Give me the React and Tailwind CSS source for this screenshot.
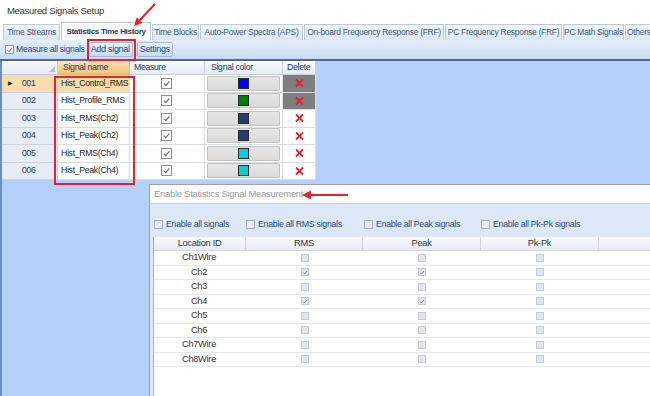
import React from "react";

const tabs = [
  { label: "Time Streams", w: "w-[57px]" },
  { label: "Statistics Time History", w: "w-[90px]", active: true },
  { label: "Time Blocks", w: "w-[47px]" },
  { label: "Auto-Power Spectra (APS)", w: "w-[103px]" },
  { label: "On-board Frequency Response (FRF)", w: "w-[140px]" },
  { label: "PC Frequency Response (FRF)", w: "w-[117px]" },
  { label: "PC Math Signals", w: "w-[61px]" },
  { label: "Others", w: "w-[40px]", left: true },
];

const signals = [
  { id: "001", name: "Hist_Control_RMS", color: "bg-[#0000ff]", dark: true, current: true },
  { id: "002", name: "Hist_Profile_RMS", color: "bg-[#008000]", dark: true },
  { id: "003", name: "Hist_RMS(Ch2)", color: "bg-[#1d3f73]" },
  { id: "004", name: "Hist_Peak(Ch2)", color: "bg-[#1d3f73]" },
  { id: "005", name: "Hist_RMS(Ch4)", color: "bg-[#12cccc]" },
  { id: "006", name: "Hist_Peak(Ch4)", color: "bg-[#12cccc]" },
];

const locations = [
  { id: "Ch1Wire" },
  { id: "Ch2", rms: true, peak: true },
  { id: "Ch3" },
  { id: "Ch4", rms: true, peak: true },
  { id: "Ch5" },
  { id: "Ch6" },
  { id: "Ch7Wire" },
  { id: "Ch8Wire" },
];

function CheckMark({ className }) {
  return (
    <svg viewBox="0 0 10 10" className={className}>
      <path d="M2 5.2 L4.2 7.4 L8.2 2.6" fill="none" stroke="currentColor" strokeWidth="1.3" />
    </svg>
  );
}

function GridCheck() {
  return (
    <div className="w-[11px] h-[11px] border border-[#8d9096] bg-white flex items-center justify-center">
      <CheckMark className="w-[9px] h-[9px] text-[#6b6e73]" />
    </div>
  );
}

function SmallCheck({ checked }) {
  return (
    <div className="w-[8px] h-[8px] border border-[#c4cbd6] bg-[#e1e6ee] flex items-center justify-center">
      {checked && <CheckMark className="w-[7px] h-[7px] text-[#4d6186]" />}
    </div>
  );
}

function RedX() {
  return (
    <svg viewBox="0 0 10 10" className="w-[11px] h-[10px]">
      <path d="M1.5 1.5 L8.5 8.5 M8.5 1.5 L1.5 8.5" stroke="#d9222a" strokeWidth="1.8" />
    </svg>
  );
}

function OptionBox({ label, w }) {
  return (
    <div className={`${w} flex items-center gap-[3px] shrink-0`}>
      <div className="w-[9px] h-[9px] border border-[#a7afbb] bg-[#e9edf3]" />
      <span className="text-[#2f4d78]">{label}</span>
    </div>
  );
}

export default function App() {
  return (
    <div className="relative w-[650px] h-[396px] overflow-hidden bg-white flex flex-col font-['Liberation_Sans',Arial,sans-serif] text-[9px] tracking-[-0.3px] leading-none">
      {/* title */}
      <div className="h-[22px] shrink-0 flex items-center pl-[7px] text-[9.5px] text-[#333]">Measured Signals Setup</div>

      {/* tabs */}
      <div className="h-[18px] shrink-0 flex items-end gap-[1px] pl-[3px] text-[8.5px]">
        {tabs.map((t) =>
          t.active ? (
            <div key={t.label} className={`${t.w} h-[18px] shrink-0 flex items-center justify-center bg-white border border-b-0 border-[#b3c6df] font-bold text-[8px] text-[#1b3a66] whitespace-nowrap`}>
              {t.label}
            </div>
          ) : (
            <div key={t.label} className={`${t.w} h-[16px] shrink-0 flex items-center ${t.left ? "justify-start pl-[1px]" : "justify-center"} bg-gradient-to-b from-[#f2f6fc] to-[#dbe7f6] border border-b-0 border-[#b9cbe1] text-[#3d5b86] whitespace-nowrap overflow-hidden`}>
              {t.label}
            </div>
          )
        )}
      </div>

      {/* toolbar */}
      <div className="h-[19px] shrink-0 flex items-center pl-[5px] bg-gradient-to-b from-[#e6effb] to-[#c9dbf4]">
        <div className="w-[9px] h-[9px] border border-[#8e96a3] bg-[#eef2f7] flex items-center justify-center">
          <CheckMark className="w-[8px] h-[8px] text-[#555]" />
        </div>
        <span className="ml-[2px] text-[8.7px] text-[#2f4d78]">Measure all signals</span>
        <div className="ml-[3px] h-[15px] px-[2px] flex items-center rounded-[2px] border border-[#a3b9d8] bg-gradient-to-b from-[#eaf1fc] to-[#c9daf2] text-[#1f4a86]">Add signal</div>
        <div className="ml-[4px] h-[15px] px-[2px] flex items-center rounded-[2px] border border-[#a3b9d8] bg-gradient-to-b from-[#eaf1fc] to-[#c9daf2] text-[#1f4a86]">Settings</div>
      </div>
      <div className="h-[2px] shrink-0 bg-[#56698a]" />

      {/* grid area */}
      <div className="flex-1 bg-[#b3d1f9] border-l-2 border-[#6b8fc3]">
        <div className="grid grid-cols-[56px_72px_75px_78px_33px] w-max text-[8.7px] text-[#1e395b]">
          <div className="h-[14px] relative bg-gradient-to-b from-[#f7f9fc] to-[#e3eaf4] border-r border-b border-[#c3d0e2]">
            <div className="absolute right-[2px] bottom-[2px] w-0 h-0 border-l-[6px] border-l-transparent border-b-[6px] border-b-[#b7c0cc]" />
          </div>
          <div className="h-[14px] flex items-center pl-[5px] bg-gradient-to-b from-[#fde3bb] to-[#f7c17a] border-r border-b border-[#e3b57a]">Signal name</div>
          <div className="h-[14px] flex items-center pl-[4px] bg-gradient-to-b from-[#f9fbfd] to-[#e6ecf4] border-r border-b border-[#c3d0e2]">Measure</div>
          <div className="h-[14px] flex items-center pl-[6px] bg-gradient-to-b from-[#f9fbfd] to-[#e6ecf4] border-r border-b border-[#c3d0e2]">Signal color</div>
          <div className="h-[14px] flex items-center pl-[4px] bg-gradient-to-b from-[#f9fbfd] to-[#e6ecf4] border-r border-b border-[#c3d0e2]">Delete</div>

          {signals.map((s) => (
            <React.Fragment key={s.id}>
              <div className={`h-[17.5px] flex items-center border-r border-b border-[#c9d5e5] ${s.current ? "bg-[#fbdcac]" : "bg-[#e6edf7]"}`}>
                <span className="w-[20px] pl-[6px] text-[6px] text-[#222]">{s.current ? "▶" : ""}</span>
                <span>{s.id}</span>
              </div>
              <div className={`h-[17.5px] flex items-center pl-[3px] text-[#222] border-r border-b border-[#d6deea] whitespace-nowrap ${s.current ? "bg-[#fcdba6]" : "bg-white"}`}>{s.name}</div>
              <div className="h-[17.5px] flex items-center justify-center pr-[2px] bg-white border-r border-b border-[#d6deea]">
                <GridCheck />
              </div>
              <div className="h-[17.5px] flex items-center px-[2px] bg-white border-r border-b border-[#d6deea]">
                <div className="w-full h-[15px] flex items-center justify-center bg-gradient-to-b from-[#e6e6e6] to-[#dadada] border border-[#c2c2c2] rounded-[1px]">
                  <div className={`w-[11px] h-[11px] border border-[#2a2a2a] ${s.color}`} />
                </div>
              </div>
              <div className={`h-[17.5px] flex items-center justify-center border-r border-b border-[#d6deea] ${s.dark ? "bg-[#7f7f7f]" : "bg-white"}`}>
                <RedX />
              </div>
            </React.Fragment>
          ))}
        </div>
      </div>

      {/* dialog window */}
      <div className="absolute left-[149px] top-[184px] w-[520px] h-[230px] flex flex-col bg-white border border-[#9aa4b2]">
        <div className="h-[19px] shrink-0 flex items-center pl-[4px] text-[9.5px] text-[#9b9b9b] bg-white border-b border-[#c5d3e6]">Enable Statistics Signal Measurement</div>
        <div className="flex-1 flex flex-col bg-[#dce8f8] pl-[3px]">
          <div className="h-[33px] shrink-0 flex items-center pt-[7px] pl-[1px] text-[8.8px]">
            <OptionBox label="Enable all signals" w="w-[92px]" />
            <OptionBox label="Enable all RMS signals" w="w-[118px]" />
            <OptionBox label="Enable all Peak signals" w="w-[117px]" />
            <OptionBox label="Enable all Pk-Pk signals" w="w-[120px]" />
          </div>
          <div className="flex-1 bg-white border-l border-[#8fb0dc] text-[9.3px] text-[#333]">
            <div className="grid grid-cols-[92px_117px_118px_118px_70px]">
              {["Location ID", "RMS", "Peak", "Pk-Pk", ""].map((h, i) => (
                <div key={i} className="h-[14px] flex items-center justify-center bg-gradient-to-b from-[#f8f9fb] to-[#e8ecf1] border-r border-b border-[#cdd5e0]">{h}</div>
              ))}
              {locations.map((l) => (
                <React.Fragment key={l.id}>
                  <div className="h-[14.5px] flex items-center justify-center pr-[2px] border-b border-[#e4e8ee]">{l.id}</div>
                  <div className="h-[14.5px] flex items-center justify-center border-b border-[#e4e8ee]"><SmallCheck checked={l.rms} /></div>
                  <div className="h-[14.5px] flex items-center justify-center border-b border-[#e4e8ee]"><SmallCheck checked={l.peak} /></div>
                  <div className="h-[14.5px] flex items-center justify-center border-b border-[#e4e8ee]"><SmallCheck /></div>
                  <div className="h-[14.5px] border-b border-[#e4e8ee]" />
                </React.Fragment>
              ))}
            </div>
          </div>
        </div>
      </div>

      {/* annotations */}
      <div className="absolute left-[87px] top-[39px] w-[49px] h-[22px] border-2 border-[#e3242b] pointer-events-none" />
      <div className="absolute left-[54px] top-[76px] w-[81px] h-[109px] border-2 border-[#e3242b] pointer-events-none" />
      <svg className="absolute left-0 top-0 w-[650px] h-[396px] pointer-events-none" viewBox="0 0 650 396">
        <line x1="155" y1="4" x2="139" y2="21" stroke="#e3242b" strokeWidth="2" />
        <polygon points="134,26 142.4,23 136.6,17.4" fill="#e3242b" />
        <line x1="348" y1="195" x2="309" y2="195" stroke="#e3242b" strokeWidth="2" />
        <polygon points="302,195 311,190.5 311,199.5" fill="#e3242b" />
      </svg>
    </div>
  );
}
